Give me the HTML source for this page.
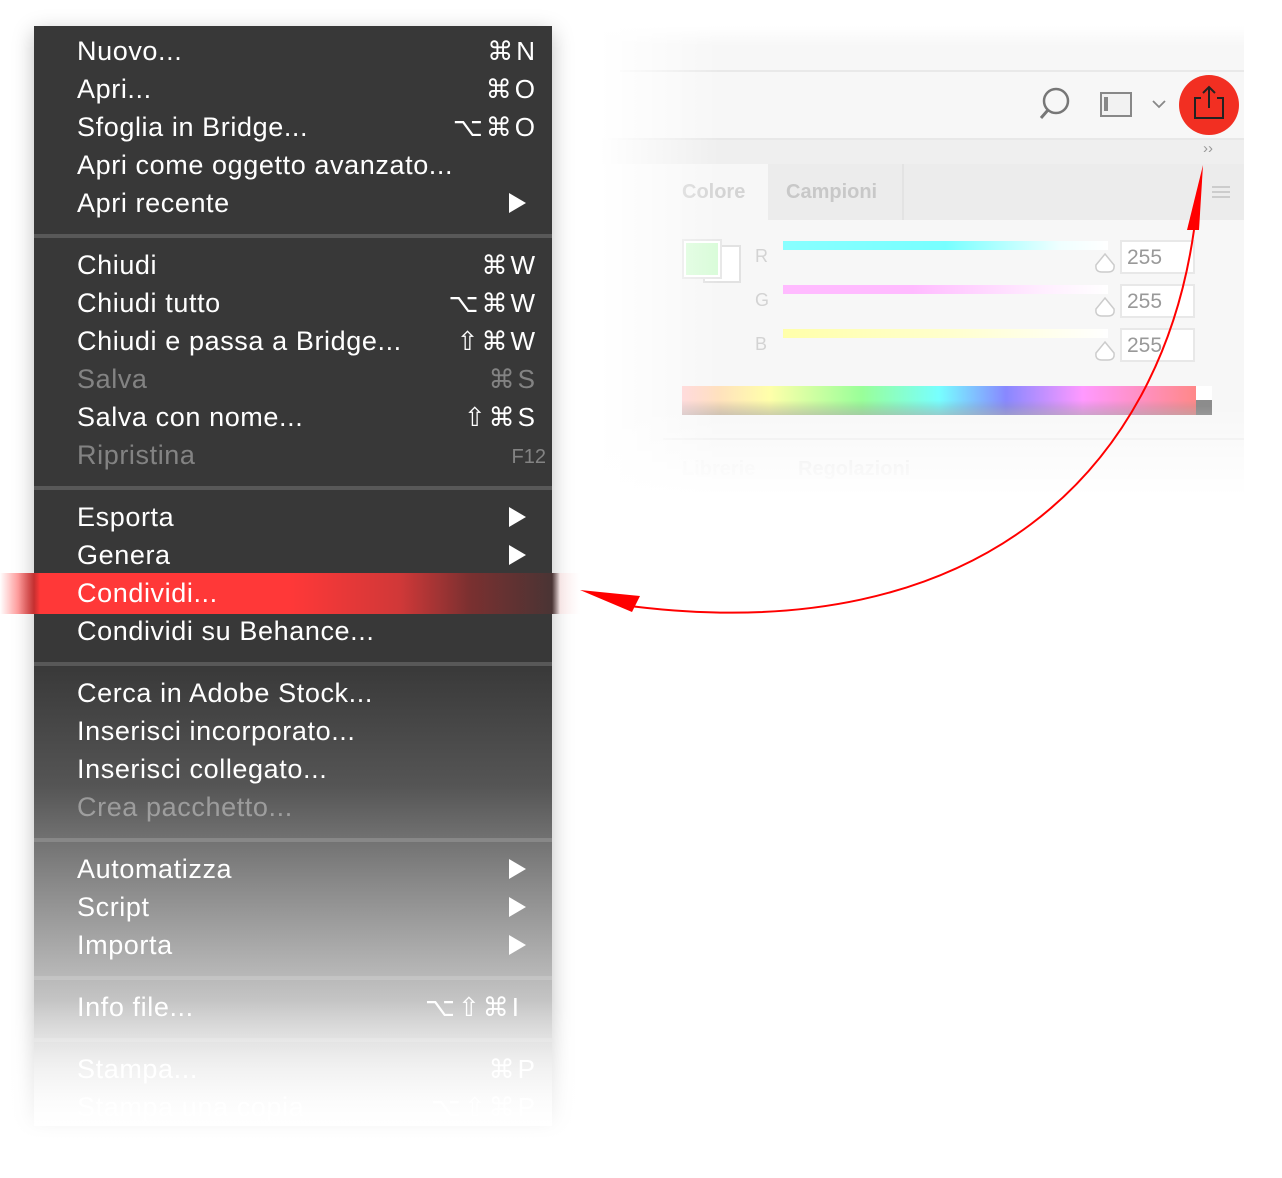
<!DOCTYPE html>
<html><head><meta charset="utf-8"><style>
*{margin:0;padding:0;box-sizing:border-box}
body{width:1282px;height:1178px;background:#fff;position:relative;overflow:hidden;font-family:"Liberation Sans",sans-serif}
.abs{position:absolute}
#menu{left:34px;top:26px;width:518px;height:1100px;background:linear-gradient(#383838 0,#383838 635px,#555 760px,#8a8a8a 860px,#bdbdbd 960px,#e0e0e0 1030px,#fafafa 1090px,#fff 1100px);box-shadow:0 6px 20px rgba(0,0,0,.25)}
.sep{position:absolute;left:0;width:518px;height:4px;background:rgba(255,255,255,.16)}
.it{position:absolute;left:43px;font-size:27px;letter-spacing:0.6px;color:#fff;line-height:30px;white-space:nowrap}
.sc{position:absolute;right:14px;font-size:26px;letter-spacing:3px;color:#fff;line-height:30px;white-space:nowrap;text-align:right}
.dis{color:rgba(255,255,255,.38)}
.tri{position:absolute;right:26px;width:0;height:0;border-left:17px solid #fff;border-top:10px solid transparent;border-bottom:10px solid transparent}
#fade{left:0;top:1000px;width:600px;height:178px;background:linear-gradient(rgba(255,255,255,0),rgba(255,255,255,.75) 110px,#fff 140px)}
#hl{left:0;top:573px;width:580px;height:41px;background:linear-gradient(90deg,rgba(255,60,60,0) 0,rgba(255,60,60,.5) 18px,#c43030 34px,#ff3838 40px,#ff3838 290px,#d03838 400px,#7a3030 470px,#4a3434 552px,rgba(255,200,200,.3) 560px,rgba(255,255,255,0) 580px)}
#panel{left:600px;top:26px;width:644px;height:470px;background:#f7f7f7}
.thumb{position:absolute;width:22px;height:22px}
</style></head><body>

<div id="panel" class="abs">
  <div class="abs" style="left:20px;top:44px;width:624px;height:2px;background:#e9e9e9"></div>
  <div class="abs" style="left:0;top:112px;width:644px;height:26px;background:#efefef;border-top:2px solid #e8e8e8"></div>
  <div class="abs" style="left:603px;top:114px;font-size:15px;color:#999">››</div>
  <div class="abs" style="left:63px;top:138px;width:581px;height:56px;background:#ececec"></div>
  <div class="abs" style="left:63px;top:138px;width:105px;height:56px;background:#f7f7f7"></div>
  <div class="abs" style="left:82px;top:155px;font-size:20px;color:#d4d4d4;font-weight:bold">Colore</div>
  <div class="abs" style="left:186px;top:155px;font-size:20px;color:#c8c8c8;font-weight:bold">Campioni</div>
  <div class="abs" style="left:302px;top:138px;width:2px;height:56px;background:#e3e3e3"></div>
  <div class="abs" style="left:612px;top:160px;width:18px;height:12px;border-top:2px solid #ccc;border-bottom:2px solid #ccc"><div style="margin-top:3px;height:2px;background:#ccc"></div></div>
  <div class="abs" style="left:103px;top:219px;width:38px;height:38px;border:2px solid #e2e2e2;background:#fff"></div>
  <div class="abs" style="left:82px;top:213px;width:40px;height:40px;border:2px solid #e8e8e8;background:#d9fcd9;outline:2px solid #fff;outline-offset:-4px"></div>
  <div class="abs" style="left:155px;top:220px;font-size:18px;color:#d3d3d3">R</div>
  <div class="abs" style="left:155px;top:264px;font-size:18px;color:#d3d3d3">G</div>
  <div class="abs" style="left:155px;top:308px;font-size:18px;color:#d3d3d3">B</div>
  <div class="abs" style="left:183px;top:215px;width:325px;height:9px;background:linear-gradient(90deg,#8ff,#7ff 50%,#efffff 85%,#fff)"></div>
  <div class="abs" style="left:183px;top:259px;width:325px;height:9px;background:linear-gradient(90deg,#fbf,#fbf 40%,#fef 80%,#fff)"></div>
  <div class="abs" style="left:183px;top:303px;width:325px;height:9px;background:linear-gradient(90deg,#ffa,#ffc 50%,#fff)"></div>
  <svg class="thumb" style="left:494px;top:226px" viewBox="0 0 22 22"><path d="M11 2 L20 13 Q21 20 14 20 H8 Q1 20 2 13 Z" fill="#fff" stroke="#ccc" stroke-width="1.5"/></svg>
  <svg class="thumb" style="left:494px;top:270px" viewBox="0 0 22 22"><path d="M11 2 L20 13 Q21 20 14 20 H8 Q1 20 2 13 Z" fill="#fff" stroke="#ccc" stroke-width="1.5"/></svg>
  <svg class="thumb" style="left:494px;top:314px" viewBox="0 0 22 22"><path d="M11 2 L20 13 Q21 20 14 20 H8 Q1 20 2 13 Z" fill="#fff" stroke="#ccc" stroke-width="1.5"/></svg>
  <div class="abs" style="left:520px;top:214px;width:75px;height:34px;border:2px solid #e8e8e8;background:#fff;font-size:21px;color:#999;padding:4px 5px">255</div>
  <div class="abs" style="left:520px;top:258px;width:75px;height:34px;border:2px solid #e8e8e8;background:#fff;font-size:21px;color:#999;padding:4px 5px">255</div>
  <div class="abs" style="left:520px;top:302px;width:75px;height:34px;border:2px solid #e8e8e8;background:#fff;font-size:21px;color:#999;padding:4px 5px">255</div>
  <div class="abs" style="left:82px;top:360px;width:514px;height:29px;background:linear-gradient(90deg,#fcc,#ffa 17%,#9f9 35%,#7ff 50%,#88f 63%,#f9f 78%,#f88 100%)"></div>
  <div class="abs" style="left:82px;top:374px;width:514px;height:15px;background:linear-gradient(rgba(150,150,150,0),rgba(150,150,150,.5))"></div>
  <div class="abs" style="left:596px;top:360px;width:16px;height:14px;background:#fff"></div>
  <div class="abs" style="left:596px;top:374px;width:16px;height:15px;background:#8c8c8c"></div>
  <div class="abs" style="left:63px;top:412px;width:581px;height:2px;background:#ececec"></div>
  <div class="abs" style="left:82px;top:432px;font-size:20px;color:#eee;font-weight:bold">Librerie</div>
  <div class="abs" style="left:198px;top:432px;font-size:20px;color:#e6e6e6;font-weight:bold">Regolazioni</div>
  <div class="abs" style="left:0;top:0;width:120px;height:470px;background:linear-gradient(90deg,#fff,rgba(255,255,255,0))"></div>
  <div class="abs" style="left:0;top:380px;width:644px;height:90px;background:linear-gradient(rgba(255,255,255,0),#fff)"></div>
  <div class="abs" style="left:0;top:0;width:644px;height:20px;background:linear-gradient(#fff,rgba(255,255,255,0))"></div>
</div>

<svg class="abs" style="left:0;top:0" width="1282" height="1178">
  <circle cx="1056" cy="101" r="12" fill="none" stroke="#777" stroke-width="2.5"/>
  <line x1="1048" y1="110" x2="1041" y2="118" stroke="#777" stroke-width="3"/>
  <rect x="1101" y="93" width="30" height="23" fill="#f2f2f2" stroke="#888" stroke-width="2"/>
  <rect x="1104" y="97" width="4" height="14" fill="#888"/>
  <path d="M1153 101 l6 6 l6 -6" fill="none" stroke="#888" stroke-width="1.8"/>
  <ellipse cx="1209" cy="105" rx="30" ry="30" fill="#f22f22"/>
  <path d="M1201 98 h-6 v20 h28 v-20 h-6" fill="none" stroke="#222" stroke-width="2"/>
  <path d="M1209 108 V87 M1203 93 l6 -6 l6 6" fill="none" stroke="#222" stroke-width="2"/>
</svg>

<div id="menu" class="abs">
  <div class="it" style="top:10px">Nuovo...</div><div class="sc" style="top:10px">⌘N</div>
  <div class="it" style="top:48px">Apri...</div><div class="sc" style="top:48px">⌘O</div>
  <div class="it" style="top:86px">Sfoglia in Bridge...</div><div class="sc" style="top:86px">⌥⌘O</div>
  <div class="it" style="top:124px">Apri come oggetto avanzato...</div>
  <div class="it" style="top:162px">Apri recente</div><div class="tri" style="top:167px"></div>
  <div class="sep" style="top:208px"></div>
  <div class="it" style="top:224px">Chiudi</div><div class="sc" style="top:224px">⌘W</div>
  <div class="it" style="top:262px">Chiudi tutto</div><div class="sc" style="top:262px">⌥⌘W</div>
  <div class="it" style="top:300px">Chiudi e passa a Bridge...</div><div class="sc" style="top:300px">⇧⌘W</div>
  <div class="it dis" style="top:338px">Salva</div><div class="sc dis" style="top:338px">⌘S</div>
  <div class="it" style="top:376px">Salva con nome...</div><div class="sc" style="top:376px">⇧⌘S</div>
  <div class="it dis" style="top:414px">Ripristina</div><div class="sc dis" style="top:416px;font-size:20px;letter-spacing:0;right:6px">F12</div>
  <div class="sep" style="top:460px"></div>
</div>
<div id="hl" class="abs"></div>
<div class="abs" style="left:34px;top:26px;width:518px;height:1100px">
  <div class="it" style="top:476px">Esporta</div><div class="tri" style="top:481px"></div>
  <div class="it" style="top:514px">Genera</div><div class="tri" style="top:519px"></div>
  <div class="it" style="top:552px">Condividi...</div>
  <div class="it" style="top:590px">Condividi su Behance...</div>
  <div class="sep" style="top:636px"></div>
  <div class="it" style="top:652px">Cerca in Adobe Stock...</div>
  <div class="it" style="top:690px">Inserisci incorporato...</div>
  <div class="it" style="top:728px">Inserisci collegato...</div>
  <div class="it dis" style="top:766px">Crea pacchetto...</div>
  <div class="sep" style="top:812px"></div>
  <div class="it" style="top:828px">Automatizza</div><div class="tri" style="top:833px"></div>
  <div class="it" style="top:866px">Script</div><div class="tri" style="top:871px"></div>
  <div class="it" style="top:904px">Importa</div><div class="tri" style="top:909px"></div>
  <div class="sep" style="top:950px"></div>
  <div class="it" style="top:966px">Info file...</div><div class="sc" style="top:966px;right:30px">⌥⇧⌘I</div>
  <div class="sep" style="top:1012px"></div>
  <div class="it" style="top:1028px">Stampa...</div><div class="sc" style="top:1028px">⌘P</div>
  <div class="it" style="top:1066px">Stampa una copia</div><div class="sc" style="top:1066px">⌥⇧⌘P</div>
</div>
<div id="fade" class="abs"></div>

<svg class="abs" style="left:0;top:0" width="1282" height="1178">
  <path d="M1194 230 C1160 470 980 650 630 606" fill="none" stroke="#f00" stroke-width="2"/>
  <polygon points="1203,165 1187,230 1199,230" fill="#f00"/>
  <polygon points="580,590 640,596 632,612" fill="#f00"/>
</svg>
</body></html>
